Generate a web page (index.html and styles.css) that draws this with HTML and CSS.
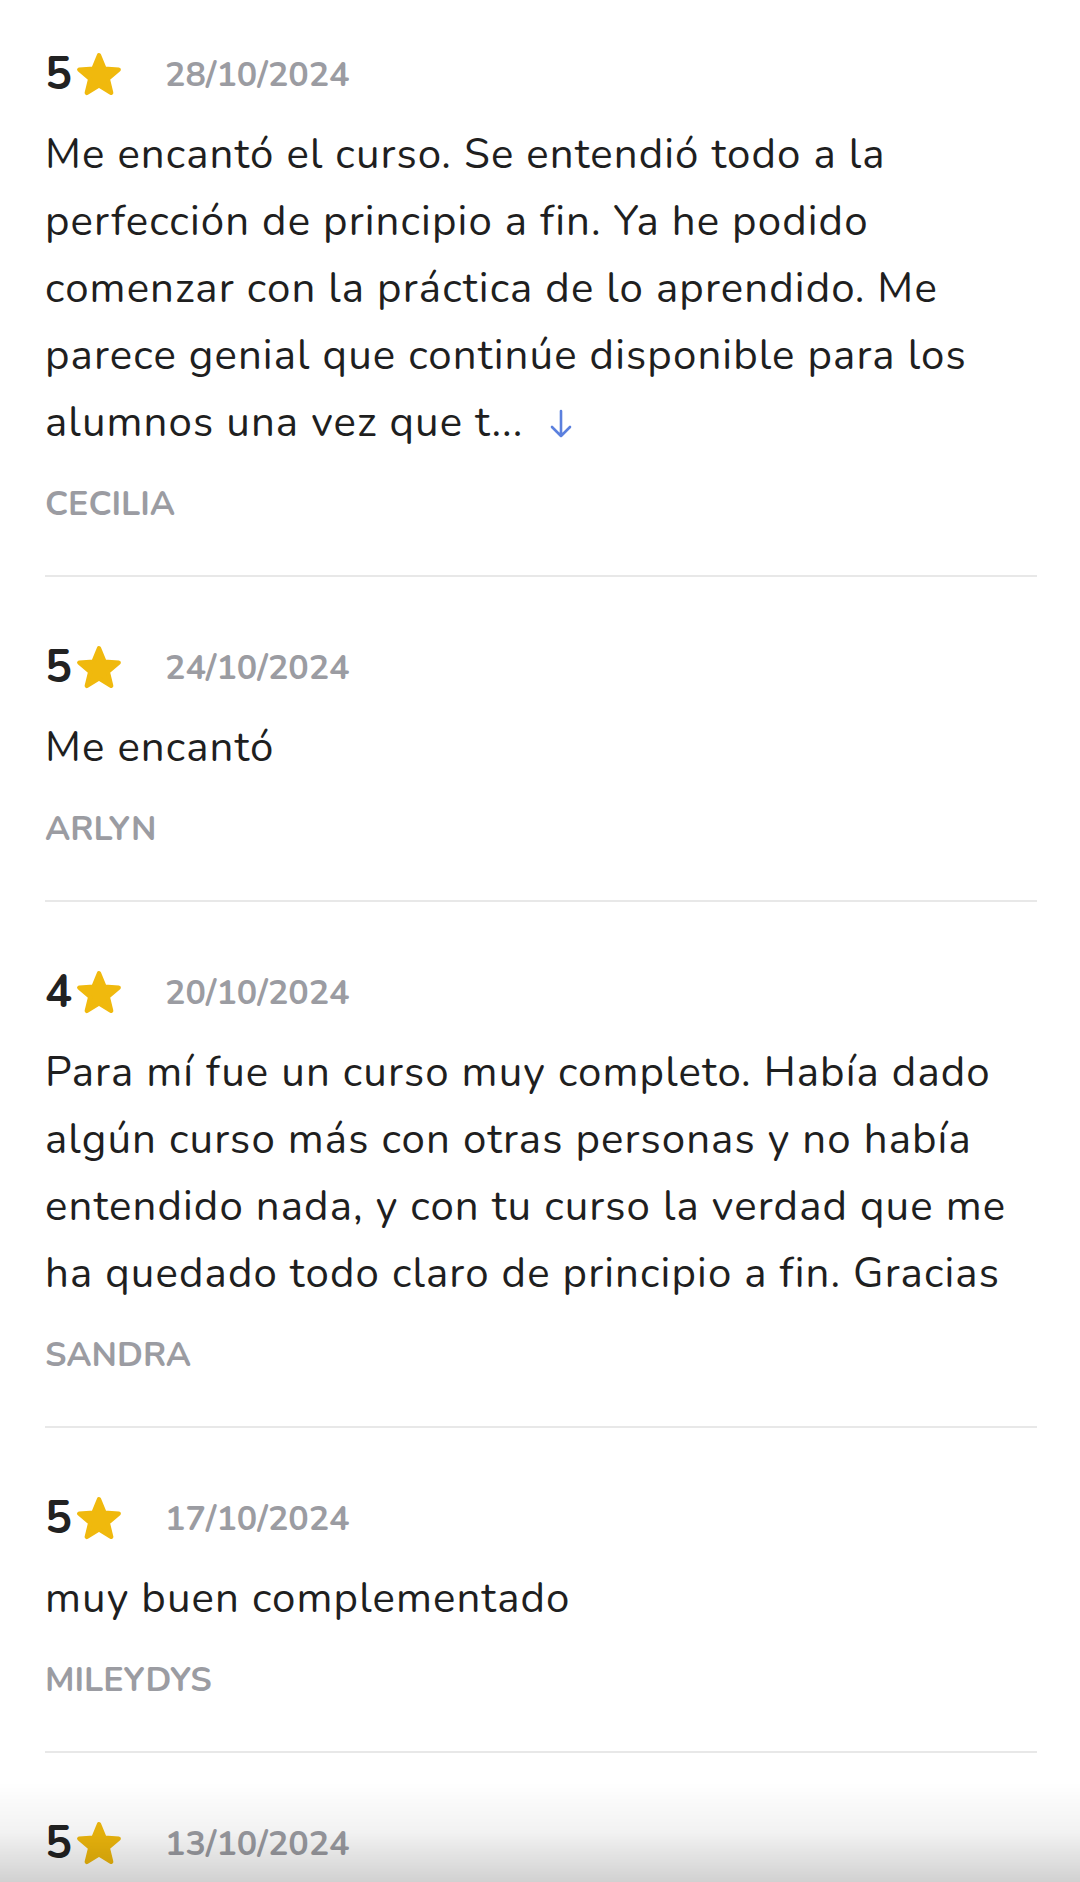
FILE: index.html
```html
<!DOCTYPE html>
<html lang="es">
<head>
<meta charset="utf-8">
<title>Reseñas</title>
<link rel="stylesheet" href="styles.css">
</head>
<body>
<main class="reviews">
  <article class="review">
    <div class="review-head">
      <span class="rating">5</span>
      <svg class="star" viewBox="0 0 44 44" aria-hidden="true"><path d="M22 4 L27 16.12 L40.07 17.13 L30.08 25.63 L33.17 38.37 L22 31.5 L10.83 38.37 L13.92 25.63 L3.93 17.13 L17 16.12 Z"/></svg>
      <span class="date">28/10/2024</span>
    </div>
    <p class="review-text">Me encantó el curso. Se entendió todo a la perfección de principio a fin. Ya he podido comenzar con la práctica de lo aprendido. Me parece genial que continúe disponible para los alumnos una vez que t...<svg class="more" viewBox="0 0 24 32" aria-hidden="true"><path d="M12 3 V28 M3 19 L12 28 L21 19"/></svg></p>
    <div class="author">CECILIA</div>
  </article>
  <article class="review">
    <div class="review-head">
      <span class="rating">5</span>
      <svg class="star" viewBox="0 0 44 44" aria-hidden="true"><path d="M22 4 L27 16.12 L40.07 17.13 L30.08 25.63 L33.17 38.37 L22 31.5 L10.83 38.37 L13.92 25.63 L3.93 17.13 L17 16.12 Z"/></svg>
      <span class="date">24/10/2024</span>
    </div>
    <p class="review-text">Me encantó</p>
    <div class="author">ARLYN</div>
  </article>
  <article class="review">
    <div class="review-head">
      <span class="rating">4</span>
      <svg class="star" viewBox="0 0 44 44" aria-hidden="true"><path d="M22 4 L27 16.12 L40.07 17.13 L30.08 25.63 L33.17 38.37 L22 31.5 L10.83 38.37 L13.92 25.63 L3.93 17.13 L17 16.12 Z"/></svg>
      <span class="date">20/10/2024</span>
    </div>
    <p class="review-text">Para mí fue un curso muy completo. Había dado algún curso más con otras personas y no había entendido nada, y con tu curso la verdad que me ha quedado todo claro de principio a fin. Gracias</p>
    <div class="author">SANDRA</div>
  </article>
  <article class="review">
    <div class="review-head">
      <span class="rating">5</span>
      <svg class="star" viewBox="0 0 44 44" aria-hidden="true"><path d="M22 4 L27 16.12 L40.07 17.13 L30.08 25.63 L33.17 38.37 L22 31.5 L10.83 38.37 L13.92 25.63 L3.93 17.13 L17 16.12 Z"/></svg>
      <span class="date">17/10/2024</span>
    </div>
    <p class="review-text">muy buen complementado</p>
    <div class="author">MILEYDYS</div>
  </article>
  <article class="review">
    <div class="review-head">
      <span class="rating">5</span>
      <svg class="star" viewBox="0 0 44 44" aria-hidden="true"><path d="M22 4 L27 16.12 L40.07 17.13 L30.08 25.63 L33.17 38.37 L22 31.5 L10.83 38.37 L13.92 25.63 L3.93 17.13 L17 16.12 Z"/></svg>
      <span class="date">13/10/2024</span>
    </div>
  </article>
</main>
<div class="bottom-shade"></div>
</body>
</html>
```
FILE: styles.css
```css
html, body {
  margin: 0;
  padding: 0;
  background: #ffffff;
}
body {
  height: 1882px;
  overflow: hidden;
  font-family: "Nunito", "Lato", "Noto Sans", sans-serif;
  color: #1f1f1f;
}
.reviews {
  padding: 0 43px 0 45px;
}
.review {
  padding: 67px 0 51px;
  border-bottom: 2px solid #e8e8e8;
}
.review:first-child {
  padding-top: 51px;
}
.review-head {
  display: flex;
  align-items: center;
  height: 48px;
}
.rating {
  font-size: 45px;
  font-weight: 700;
  color: #222222;
  line-height: 48px;
}
.star {
  width: 48px;
  height: 48px;
  margin-left: 3px;
  fill: #f0b90d;
  stroke: #f0b90d;
  stroke-width: 4;
  stroke-linejoin: round;
}
.date {
  margin-left: 42px;
  font-size: 34px;
  font-weight: 700;
  color: #9b9ca2;
  line-height: 48px;
}
.review-text {
  margin: 22px 0 0;
  font-size: 42px;
  letter-spacing: 1.1px;
  line-height: 67px;
  color: #1f1f1f;
}
.more {
  width: 24px;
  height: 32px;
  margin-left: 26px;
  vertical-align: -4px;
  fill: none;
  stroke: #5b80de;
  stroke-width: 2.6;
  stroke-linecap: round;
  stroke-linejoin: round;
}
.author {
  margin-top: 28px;
  font-size: 34px;
  font-weight: 700;
  line-height: 40px;
  color: #9b9ca2;
}
.bottom-shade {
  position: fixed;
  left: 0;
  right: 0;
  bottom: 0;
  height: 100px;
  background: linear-gradient(to bottom, rgba(0,0,0,0) 0%, rgba(0,0,0,0.05) 50%, rgba(0,0,0,0.18) 100%);
  pointer-events: none;
}
```
